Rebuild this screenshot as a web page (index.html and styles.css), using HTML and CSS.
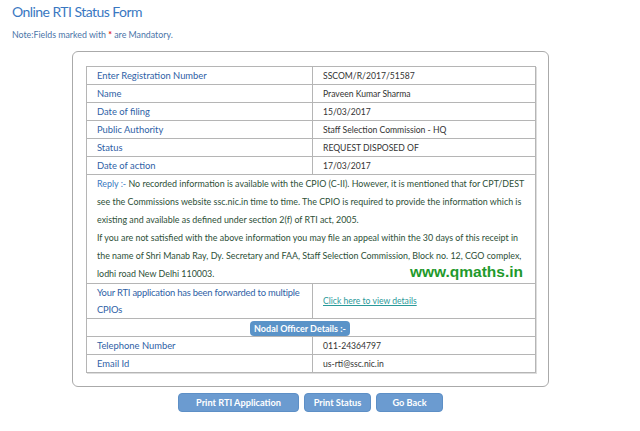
FILE: index.html
```html
<!DOCTYPE html>
<html lang="en">
<head>
  <meta charset="UTF-8" />
  <meta name="viewport" content="width=device-width, initial-scale=1.0"/>
  <title>Online RTI Status Form</title>
  <link rel="stylesheet" href="styles.css">
</head>
<body>

  <div class="page">
    <h2 class="title">Online RTI Status Form</h2>
    <p class="note">Note:Fields marked with <span class="req">*</span> are Mandatory.</p>

    <div class="form-box">
      <table class="status-table">
        <tr>
          <td class="label">Enter Registration Number</td>
          <td class="value">SSCOM/R/2017/51587</td>
        </tr>
        <tr>
          <td class="label">Name</td>
          <td class="value">Praveen Kumar Sharma</td>
        </tr>
        <tr>
          <td class="label">Date of filing</td>
          <td class="value">15/03/2017</td>
        </tr>
        <tr>
          <td class="label">Public Authority</td>
          <td class="value">Staff Selection Commission - HQ</td>
        </tr>
        <tr>
          <td class="label">Status</td>
          <td class="value">REQUEST DISPOSED OF</td>
        </tr>
        <tr>
          <td class="label">Date of action</td>
          <td class="value">17/03/2017</td>
        </tr>
        <tr>
          <td class="reply" colspan="2">
            <span class="reply-head">Reply :-</span> No recorded information is available with the CPIO (C-II). However, it is mentioned that for CPT/DEST<br>
            see the Commissions website ssc.nic.in time to time. The CPIO is required to provide the information which is<br>
            existing and available as defined under section 2(f) of RTI act, 2005.<br>
            If you are not satisfied with the above information you may file an appeal within the 30 days of this receipt in<br>
            the name of Shri Manab Ray, Dy. Secretary and FAA, Staff Selection Commission, Block no. 12, CGO complex,<br>
            lodhi road New Delhi 110003.
            <span class="site">www.qmaths.in</span>
          </td>
        </tr>
        <tr>
          <td class="label multi">Your RTI application has been forwarded to multiple<br>CPIOs</td>
          <td class="value"><a href="#" class="details-link">Click here to view details</a></td>
        </tr>
        <tr>
          <td class="section" colspan="2"><span class="badge">Nodal Officer Details :-</span></td>
        </tr>
        <tr>
          <td class="label">Telephone Number</td>
          <td class="value">011-24364797</td>
        </tr>
        <tr>
          <td class="label">Email Id</td>
          <td class="value">us-rti@ssc.nic.in</td>
        </tr>
      </table>
    </div>

    <div class="actions">
      <button class="btn btn-wide">Print RTI Application</button>
      <button class="btn">Print Status</button>
      <button class="btn">Go Back</button>
    </div>
  </div>

</body>
</html>
```

FILE: styles.css
```css
* {
  margin: 0;
  padding: 0;
  box-sizing: border-box;
  font-family: Lato, 'Open Sans', sans-serif;
}

body {
  background: #fff;
  color: #333;
}

.page {
  padding: 2px 12px 0;
  width: 560px;
}

.title {
  font-size: 14px;
  font-weight: normal;
  letter-spacing: -0.55px;
  color: #3a78c2;
  line-height: 20px;
}

.note {
  margin-top: 7px;
  font-size: 8.8px;
  color: #4a74a8;
  line-height: 12px;
}

.req {
  color: #e02020;
  font-weight: bold;
}

.form-box {
  margin: 10px 0 0 60px;
  width: 477px;
  border: 1px solid #aaa;
  border-radius: 6px;
  padding: 14px 12px 13px 13px;
}

.status-table {
  width: 450px;
  border-collapse: collapse;
  border: 1px solid #b5b5b5;
  box-shadow: 1px 1px 0 #ddd;
  table-layout: fixed;
}

.status-table td {
  border: 1px solid #b5b5b5;
  height: 18px;
  padding: 0 10px;
  vertical-align: middle;
  white-space: nowrap;
}

.label {
  width: 226px;
  font-size: 9.4px;
  color: #2f5fa6;
}

.label.multi {
  line-height: 17px;
  letter-spacing: -0.2px;
}

.value {
  font-size: 8.6px;
  color: #333;
}

.reply {
  position: relative;
  font-size: 8.9px;
  line-height: 18px;
  color: #2d4f37;
}

.reply-head {
  color: #3a78c2;
}

.site {
  position: absolute;
  right: 12px;
  bottom: 2px;
  font-family: 'Liberation Sans', Arial, sans-serif;
  font-weight: bold;
  font-size: 15.5px;
  color: #1f9a2c;
  line-height: 18px;
}

.details-link {
  color: #2a9a9a;
  text-decoration: underline;
}

/* badge sits a little left of the table's centre */
.status-table .section {
  text-align: center;
  line-height: 15px;
  padding-right: 32px;
}

.badge {
  display: inline-block;
  vertical-align: middle;
  background: #5a93c8;
  color: #fff;
  font-weight: bold;
  font-size: 9px;
  line-height: 15px;
  padding: 0 4px;
  border-radius: 4px;
}

.actions {
  display: flex;
  justify-content: center;
  gap: 5px;
  margin: 6px 0 0 60px;
  width: 477px;
}

.btn {
  background: #6b9bd0;
  color: #fff;
  border: 1px solid #5d8fc6;
  border-radius: 4px;
  font-weight: bold;
  font-size: 9.2px;
  height: 19px;
  width: 67px;
  cursor: pointer;
}

.btn-wide {
  width: 121px;
}
```
